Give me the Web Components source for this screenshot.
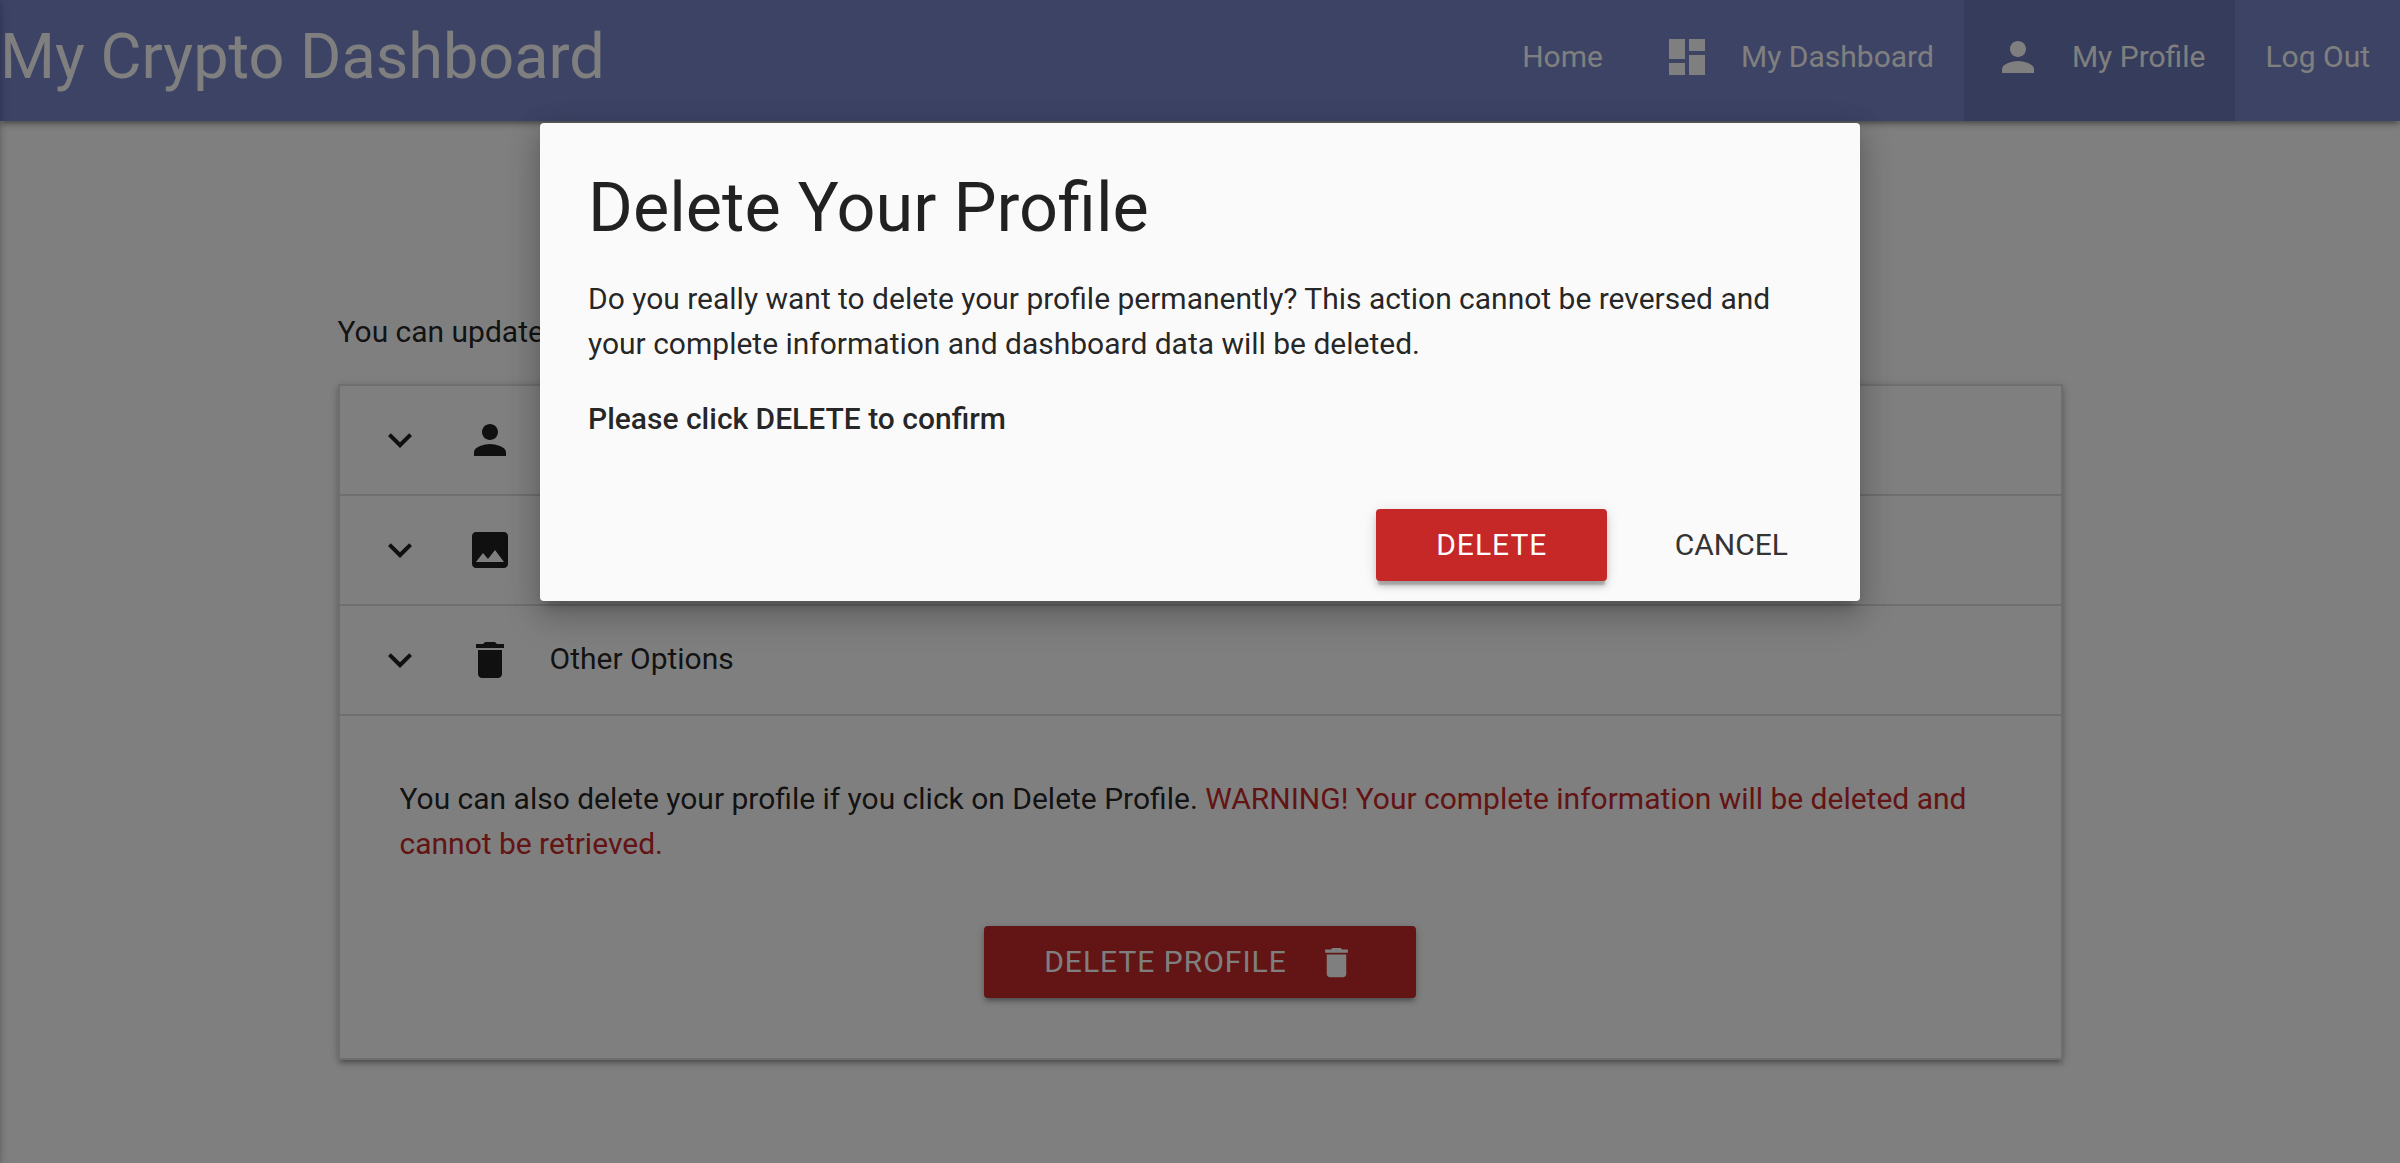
<!DOCTYPE html>
<html lang="en">
<head>
<meta charset="utf-8">
<title>My Crypto Dashboard</title>
<style>
  html { font: 30px/1.5 Roboto, sans-serif; color: rgba(0,0,0,.87);
    --depth-1: 0 4px 4px 0 rgba(0,0,0,.14), 0 6px 2px -4px rgba(0,0,0,.12), 0 2px 10px 0 rgba(0,0,0,.2);
    --depth-1-half: 0 6px 6px 0 rgba(0,0,0,.14), 0 2px 14px 0 rgba(0,0,0,.12), 0 6px 2px -2px rgba(0,0,0,.2);
    --danger: #c62828; }
  body { margin: 0; background: #fff; height: 1163px; overflow: hidden; }
</style>
</head>
<body>
<crypto-app></crypto-app>
<script>
const ICONS = {
  dashboard: 'M3 13h8V3H3v10zm0 8h8v-6H3v6zm10 0h8V11h-8v10zm0-18v6h8V3h-8z',
  person: 'M12 12c2.21 0 4-1.79 4-4s-1.79-4-4-4-4 1.79-4 4 1.79 4 4 4zm0 2c-2.67 0-8 1.34-8 4v2h16v-2c0-2.66-5.33-4-8-4z',
  image: 'M21 19V5c0-1.1-.9-2-2-2H5c-1.1 0-2 .9-2 2v14c0 1.1.9 2 2 2h14c1.1 0 2-.9 2-2zM8.5 13.5l2.5 3.01L14.5 12l4.5 6H5l3.500-4.500z',
  delete: 'M6 19c0 1.1.9 2 2 2h8c1.1 0 2-.9 2-2V7H6v12zM19 4h-3.500l-1-1h-5l-1 1H5v2h14V4z',
  expand: 'M16.590 8.590L12 13.170 7.410 8.590 6 10l6 6 6-6z'
};
const define = (name, html) => customElements.define(name, class extends HTMLElement {
  constructor() {
    super();
    this.attachShadow({ mode: 'open' }).innerHTML = html;
  }
});

customElements.define('md-icon', class extends HTMLElement {
  connectedCallback() {
    if (this.shadowRoot) return;
    this.attachShadow({ mode: 'open' }).innerHTML = `
      <style>:host{display:block;width:48px;height:48px;flex:none}svg{display:block;width:100%;height:100%;fill:currentColor}</style>
      <svg viewBox="0 0 24 24"><path d="${ICONS[this.getAttribute('name')]}"/></svg>`;
  }
});

define('nav-item', `
  <style>
    :host{display:flex;align-items:center;gap:30px;padding:0 30px;height:128px;white-space:nowrap}
    :host([active]){background:rgba(0,0,0,.1)}
    span{padding-bottom:2px}
  </style><slot name="icon"></slot><span><slot></slot></span>`);

define('nav-bar', `
  <style>
    :host{display:flex;justify-content:space-between;height:128px;margin-top:-7px;background:#7986cb;color:#fff;box-shadow:var(--depth-1)}
    .brand{font-size:63px;line-height:128px;white-space:nowrap}
    nav{display:flex}
  </style><div class="brand"><slot name="brand"></slot></div><nav><slot></slot></nav>`);

define('md-button', `
  <style>
    :host{display:inline-flex;align-items:center;gap:30px;height:72px;padding:0 60px;border-radius:4px;white-space:nowrap;box-sizing:border-box;color:#343434}
    :host([raised]){background:var(--danger);color:#fff;letter-spacing:1px;box-shadow:var(--depth-1)}
    :host([raised][focused]){box-shadow:var(--depth-1-half)}
    span{padding-bottom:2px}
    ::slotted(md-icon){width:39px;height:39px}
  </style><span><slot></slot></span><slot name="icon"></slot>`);

define('collapsible-item', `
  <style>
    :host{display:block}
    header{display:flex;gap:30px;padding:30px;height:48px;border-bottom:2px solid #ddd}
    .cell{display:flex;justify-content:center;width:60px}
    .body{display:none}
    :host([open]) .body{display:block;padding:60px;border-bottom:2px solid #ddd}
  </style>
  <header><div class="cell"><md-icon name="expand"></md-icon></div><div class="cell"><slot name="icon"></slot></div><span><slot name="title"></slot></span></header>
  <div class="body"><slot></slot></div>`);

define('collapsible-list', `
  <style>:host{display:block;border:2px solid #ddd;border-bottom:0;box-shadow:var(--depth-1)}</style><slot></slot>`);

define('profile-page', `
  <style>
    :host{display:block;width:1725px;margin:188px auto 0}
    .intro{margin:0 0 30px}
    p{margin:0 0 60px;word-spacing:-.06px}
    .warn{color:var(--danger)}
    .actions{display:flex;justify-content:center}
  </style>
  <p class="intro">You can update</p>
  <collapsible-list>
    <collapsible-item><md-icon slot="icon" name="person"></md-icon></collapsible-item>
    <collapsible-item><md-icon slot="icon" name="image"></md-icon></collapsible-item>
    <collapsible-item open>
      <md-icon slot="icon" name="delete"></md-icon><span slot="title">Other Options</span>
      <p>You can also delete your profile if you click on Delete Profile. <span class="warn">WARNING! Your complete information will be deleted and cannot be retrieved.</span></p>
      <div class="actions"><md-button raised>DELETE PROFILE<md-icon slot="icon" name="delete"></md-icon></md-button></div>
    </collapsible-item>
  </collapsible-list>`);

define('side-drawer', `
  <style>:host{position:absolute;top:0;left:-600px;width:600px;height:1163px;background:#fff;box-shadow:var(--depth-1)}</style>`);

define('modal-dialog', `
  <style>
    :host{position:absolute;inset:0;background:rgba(0,0,0,.5);display:flex;justify-content:center;align-items:flex-start}
    .dialog{width:1320px;height:478px;margin-top:123px;background:#fafafa;border-radius:4px;display:flex;flex-direction:column;justify-content:space-between;
      box-shadow:0 16px 34px 4px rgba(0,0,0,.14),0 6px 28px 4px rgba(0,0,0,.12),0 10px 10px -6px rgba(0,0,0,.2)}
    .content{padding:48px 48px 0}
    footer{display:flex;justify-content:flex-end;gap:7.4px;padding:20px 12px}
  </style>
  <div class="dialog" role="dialog"><div class="content"><slot></slot></div><footer><slot name="actions"></slot></footer></div>`);

define('crypto-app', `
  <style>
    :host{display:flow-root;position:relative;height:1163px;overflow:hidden}
    h4{font-size:68.4px;line-height:75.24px;font-weight:400;margin:0 0 30px}
    p{margin:0 0 30px;word-spacing:-.06px}
    strong{font-weight:500}
  </style>
  <nav-bar>
    <span slot="brand">My Crypto Dashboard</span>
    <nav-item>Home</nav-item>
    <nav-item><md-icon slot="icon" name="dashboard"></md-icon>My Dashboard</nav-item>
    <nav-item active><md-icon slot="icon" name="person"></md-icon>My Profile</nav-item>
    <nav-item>Log Out</nav-item>
  </nav-bar>
  <profile-page></profile-page>
  <side-drawer></side-drawer>
  <modal-dialog>
    <h4>Delete Your Profile</h4>
    <p>Do you really want to delete your profile permanently? This action cannot be reversed and your complete information and dashboard data will be deleted.</p>
    <p><strong>Please click DELETE to confirm</strong></p>
    <md-button slot="actions" raised focused>DELETE</md-button>
    <md-button slot="actions">CANCEL</md-button>
  </modal-dialog>`);
</script>
</body>
</html>
